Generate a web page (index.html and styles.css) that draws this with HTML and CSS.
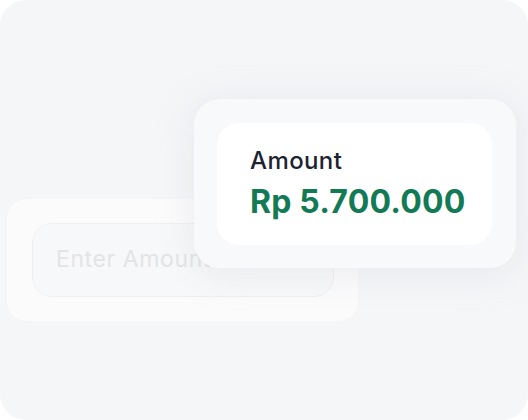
FILE: index.html
```html
<!DOCTYPE html>
<html>
<head>
<meta charset="utf-8">
<link rel="stylesheet" href="styles.css">
</head>
<body>
<div class="frame">
  <div class="back-card">
    <div class="input">Enter Amount</div>
  </div>
  <div class="front-card">
    <div class="inner">
      <div class="label">Amount</div>
      <div class="value">Rp 5.700.000</div>
    </div>
  </div>
</div>
</body>
</html>
```
FILE: styles.css
```css
html, body {
  margin: 0;
  padding: 0;
  background: #ffffff;
}
.frame {
  position: relative;
  width: 528px;
  height: 420px;
  box-sizing: border-box;
  border-radius: 26px;
  background: #f5f6f8;
  overflow: hidden;
  padding: 199px 0 0 7px;
  font-family: Inter, "Noto Sans", sans-serif;
}
.back-card {
  width: 351px;
  height: 122px;
  box-sizing: border-box;
  padding: 24px 24px 0 25px;
  background: #fbfbfc;
  border-radius: 20px;
}
.input {
  height: 74px;
  box-sizing: border-box;
  border: 1.5px solid #eeeff1;
  border-radius: 20px;
  background: #f7f8f9;
  display: flex;
  align-items: center;
  padding: 0 0 2px 23px;
  font-size: 23px;
  color: #e3e4e6;
  letter-spacing: 0.6px;
}
.front-card {
  position: absolute;
  left: 194px;
  top: 99px;
  width: 322px;
  height: 169px;
  box-sizing: border-box;
  padding: 24px 24px 0 23px;
  background: #f8f9fa;
  border-radius: 26px;
  box-shadow: 0 4px 36px rgba(196, 200, 210, 0.3);
}
.inner {
  height: 122px;
  box-sizing: border-box;
  background: #ffffff;
  border-radius: 22px;
  padding: 23px 0 0 33px;
}
.label {
  font-size: 24px;
  font-weight: 500;
  color: #1c2331;
  line-height: 30px;
  letter-spacing: 0.4px;
}
.value {
  margin-top: 7px;
  font-size: 32px;
  font-weight: 700;
  color: #127a55;
  line-height: 38px;
  letter-spacing: 0.2px;
}
```
